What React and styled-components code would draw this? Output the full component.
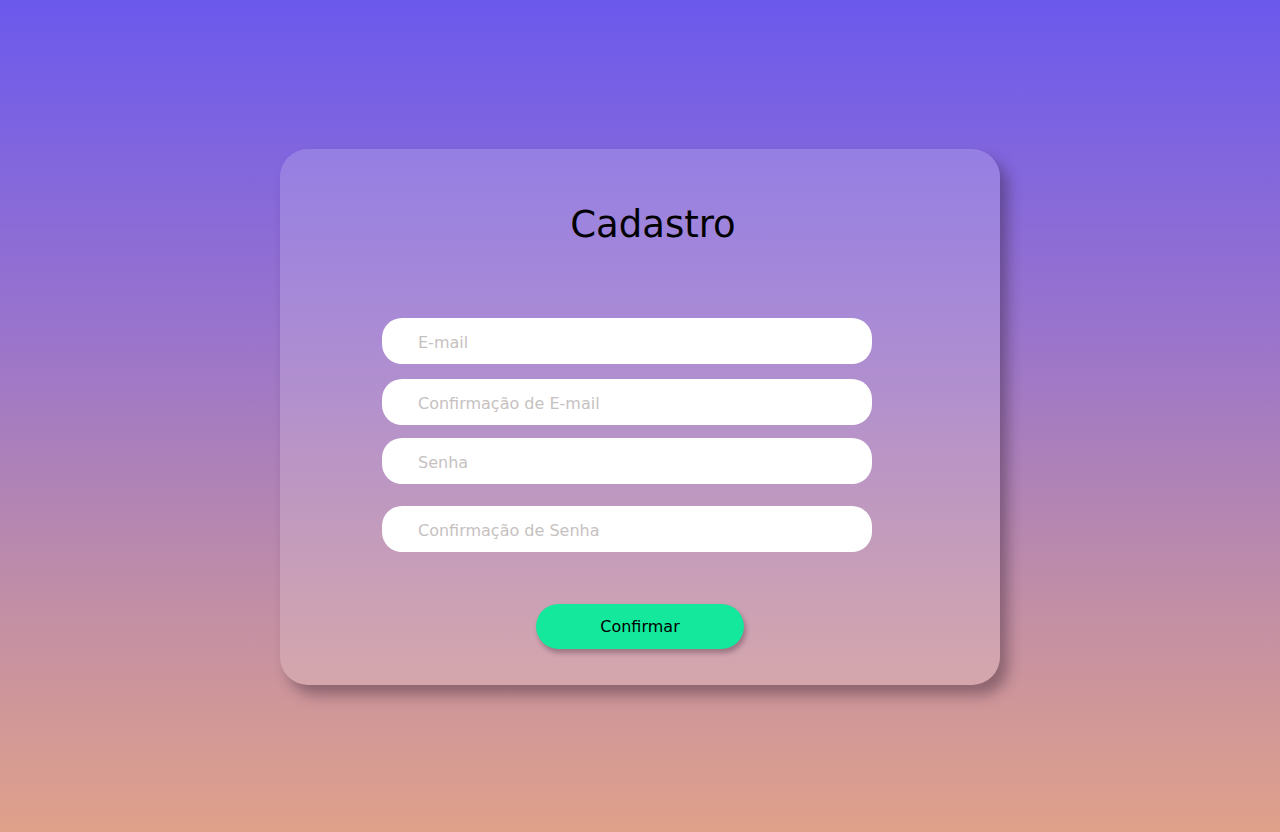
import styled, { createGlobalStyle } from "styled-components";

const GlobalStyle = createGlobalStyle`
  * {
    box-sizing: border-box;
  }

  body {
    margin: 0;
    font-family: "DejaVu Sans", "Noto Sans", sans-serif;
  }
`;

const Page = styled.div`
  width: 100%;
  height: 832px;
  padding-top: 2px;
  display: flex;
  align-items: center;
  justify-content: center;
  background: linear-gradient(180deg, #6b59ed 0%, #9a74cc 40%, #c18ea6 72%, #e0a18a 100%);
`;

const Card = styled.form`
  width: 720px;
  height: 536px;
  border-radius: 28px;
  background: rgba(255, 255, 255, 0.17);
  box-shadow: 8px 10px 14px rgba(40, 20, 40, 0.38);
  display: flex;
  flex-direction: column;
  align-items: center;
  padding-top: 54px;
`;

const Title = styled.h1`
  margin: 0 0 0 26px;
  font-size: 37px;
  font-weight: 400;
  color: #000;
  line-height: 44px;
`;

const Fields = styled.div`
  display: flex;
  flex-direction: column;
  margin-top: 71px;
  margin-right: 26px;
`;

const Input = styled.input`
  width: 490px;
  height: 46px;
  margin-top: ${props => props.$gap || 0}px;
  border: none;
  border-radius: 20px;
  background: #fff;
  padding: 2px 0 0 36px;
  font-family: inherit;
  font-size: 16px;
  color: #333;
  outline: none;

  &::placeholder {
    color: #c6c1c1;
  }
`;

const Button = styled.button`
  width: 208px;
  height: 45px;
  margin-top: 52px;
  border: none;
  border-radius: 23px;
  background: #14e89c;
  box-shadow: 2px 4px 5px rgba(60, 30, 50, 0.35);
  font-family: inherit;
  font-size: 16px;
  color: #000;
  cursor: pointer;
`;

const fields = [
  { placeholder: "E-mail", type: "email", gap: 0 },
  { placeholder: "Confirmação de E-mail", type: "email", gap: 15 },
  { placeholder: "Senha", type: "password", gap: 13 },
  { placeholder: "Confirmação de Senha", type: "password", gap: 22 },
];

export default function App() {
  return (
    <>
      <GlobalStyle />
      <Page>
        <Card onSubmit={e => e.preventDefault()}>
          <Title>Cadastro</Title>
          <Fields>
            {fields.map(f => (
              <Input key={f.placeholder} type={f.type} placeholder={f.placeholder} $gap={f.gap} />
            ))}
          </Fields>
          <Button type="submit">Confirmar</Button>
        </Card>
      </Page>
    </>
  );
}
